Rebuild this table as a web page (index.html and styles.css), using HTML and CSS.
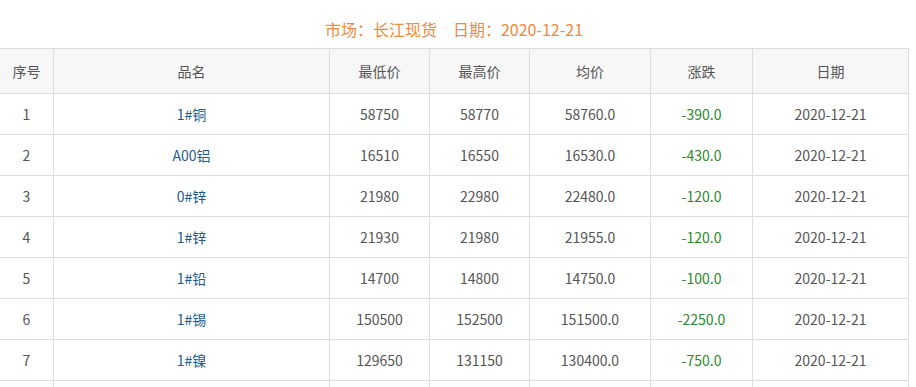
FILE: index.html
```html
<!DOCTYPE html>
<html lang="zh-CN">
<head>
    <meta charset="UTF-8">
    <title>长江现货</title>
    <link rel="stylesheet" href="styles.css">
</head>
<body>
    <div class="title">市场：长江现货　日期：2020-12-21</div>
    <table class="price-table">
        <thead>
            <tr>
                <th class="c-no">序号</th>
                <th class="c-name">品名</th>
                <th class="c-low">最低价</th>
                <th class="c-high">最高价</th>
                <th class="c-avg">均价</th>
                <th class="c-chg">涨跌</th>
                <th class="c-date">日期</th>
            </tr>
        </thead>
        <tbody>
            <tr><td>1</td><td class="name">1#铜</td><td>58750</td><td>58770</td><td>58760.0</td><td class="down">-390.0</td><td>2020-12-21</td></tr>
            <tr><td>2</td><td class="name">A00铝</td><td>16510</td><td>16550</td><td>16530.0</td><td class="down">-430.0</td><td>2020-12-21</td></tr>
            <tr><td>3</td><td class="name">0#锌</td><td>21980</td><td>22980</td><td>22480.0</td><td class="down">-120.0</td><td>2020-12-21</td></tr>
            <tr><td>4</td><td class="name">1#锌</td><td>21930</td><td>21980</td><td>21955.0</td><td class="down">-120.0</td><td>2020-12-21</td></tr>
            <tr><td>5</td><td class="name">1#铅</td><td>14700</td><td>14800</td><td>14750.0</td><td class="down">-100.0</td><td>2020-12-21</td></tr>
            <tr><td>6</td><td class="name">1#锡</td><td>150500</td><td>152500</td><td>151500.0</td><td class="down">-2250.0</td><td>2020-12-21</td></tr>
            <tr><td>7</td><td class="name">1#镍</td><td>129650</td><td>131150</td><td>130400.0</td><td class="down">-750.0</td><td>2020-12-21</td></tr>
            <tr><td></td><td></td><td></td><td></td><td></td><td></td><td></td></tr>
        </tbody>
    </table>
</body>
</html>
```

FILE: styles.css
```css
body {
    margin: 0;
    padding: 0;
    background: #fff;
    font-family: "Noto Sans CJK SC", "Noto Sans", sans-serif;
    color: #555;
    overflow: hidden;
}
.title {
    width: 908px;
    padding: 18px 0 8px;
    line-height: 22px;
    font-size: 16px;
    text-align: center;
    color: #f08a3c;
}
.price-table {
    width: 909px;
    margin-left: -1px;
    border-collapse: collapse;
    table-layout: fixed;
    font-size: 14px;
}
.price-table th,
.price-table td {
    border: 1px solid #ddd;
    text-align: center;
    padding: 0;
    font-weight: normal;
}
.price-table th {
    height: 44px;
    background: #f7f7f7;
    color: #555;
}
.price-table td {
    height: 40px;
}
.c-no { width: 53px; }
.c-name { width: 275px; }
.c-low { width: 99px; }
.c-high { width: 99px; }
.c-avg { width: 120px; }
.c-chg { width: 101px; }
.c-date { width: 155px; }
.name {
    color: #1f5b8a;
}
.down {
    color: #2a8a2a;
}
```
